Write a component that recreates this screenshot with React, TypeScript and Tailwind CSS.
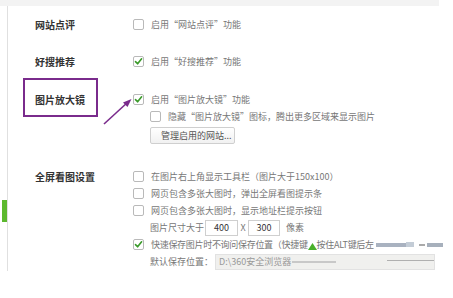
import React from "react";

function Box({ checked = false }: { checked?: boolean }) {
  return (
    <span className="w-[11px] h-[11px] shrink-0 border border-[#b9b9b9] rounded-[2px] bg-white flex items-center justify-center">
      {checked && (
        <svg width="9" height="9" viewBox="0 0 9 9">
          <path d="M1.5 4.6 L3.6 6.8 L7.6 1.8" fill="none" stroke="#3a9a2a" strokeWidth="1.6" strokeLinecap="round" strokeLinejoin="round" />
        </svg>
      )}
    </span>
  );
}

function Opt({ checked = false, children }: { checked?: boolean; children: React.ReactNode }) {
  return (
    <div className="h-[17px] flex items-center gap-[7px] text-[9px] text-[#777] whitespace-nowrap">
      <Box checked={checked} />
      <span>{children}</span>
    </div>
  );
}

function Label({ children }: { children: React.ReactNode }) {
  return (
    <div className="w-[125px] shrink-0 pl-[27px] h-[17px] flex items-center text-[10px] font-semibold text-[#333] whitespace-nowrap">
      {children}
    </div>
  );
}

export default function App() {
  return (
    <div className="w-[453px] h-[298px] bg-white relative overflow-hidden font-['Noto_Sans_CJK_SC','Noto_Sans',sans-serif]">
      <div className="h-[6px] w-[439px] bg-[#f3f3f3]" />
      <div className="flex">
        <div className="w-[7px] shrink-0">
          <div className="mt-[194px] ml-[2px] w-[5px] h-[22px] bg-[#5cb82e]" />
        </div>
        <div className="flex-1 border-l border-[#e0e0e0] flex flex-col">
          {/* 网站点评 */}
          <div className="flex mt-[10px]">
            <Label>网站点评</Label>
            <Opt>启用“网站点评”功能</Opt>
          </div>
          {/* 好搜推荐 */}
          <div className="flex mt-[20px]">
            <Label>好搜推荐</Label>
            <Opt checked>启用“好搜推荐”功能</Opt>
          </div>
          {/* 图片放大镜 */}
          <div className="flex mt-[21px] relative">
            <Label>图片放大镜</Label>
            <div className="flex flex-col">
              <Opt checked>启用“图片放大镜”功能</Opt>
              <div className="pl-[17px]">
                <Opt>隐藏“图片放大镜”图标，腾出更多区域来显示图片</Opt>
                <div className="mt-[2px] w-[85px] h-[17px] border border-[#cfcfcf] rounded-[2px] bg-gradient-to-b from-white to-[#f1f1f1] flex items-center pl-[10px] text-[9px] text-[#555] whitespace-nowrap">
                  管理启用的网站...
                </div>
              </div>
            </div>
            <div className="absolute left-[15px] top-[-13px] w-[75px] h-[39px] border-2 border-[#7a2b8c]" />
            <svg className="absolute left-[94px] top-[5px]" width="32" height="30" viewBox="0 0 32 30">
              <path d="M2 28 L26 6" stroke="#7a2b8c" strokeWidth="1.6" fill="none" />
              <path d="M29.5 3 L21 6.5 L25.5 11 Z" fill="#7a2b8c" />
            </svg>
          </div>
          {/* 全屏看图设置 */}
          <div className="flex mt-[24px]">
            <Label>全屏看图设置</Label>
            <div className="flex flex-col">
              <Opt>在图片右上角显示工具栏（图片大于150x100）</Opt>
              <Opt>网页包含多张大图时，弹出全屏看图提示条</Opt>
              <Opt>网页包含多张大图时，显示地址栏提示按钮</Opt>
              <div className="pl-[17px] h-[17px] flex items-center text-[9px] text-[#777] whitespace-nowrap">
                <span className="w-[55px] shrink-0 overflow-visible">图片尺寸大于</span>
                <span className="w-[33px] h-[16px] shrink-0 border border-[#cfcfcf] bg-white flex items-center justify-center text-[#333]">400</span>
                <span className="w-[10px] shrink-0 text-center">X</span>
                <span className="w-[32px] h-[16px] shrink-0 border border-[#cfcfcf] bg-white flex items-center justify-center text-[#333]">300</span>
                <span className="ml-[6px]">像素</span>
              </div>
              <div className="h-[17px] flex items-center gap-[7px] text-[9px] text-[#777] whitespace-nowrap">
                <Box checked />
                <span className="flex items-center tracking-[-0.3px]">
                  快速保存图片时不询问保存位置（快捷键
                  <svg width="9" height="7" viewBox="0 0 9 7" className="mt-[3px]">
                    <path d="M4.5 0 L9 7 L0 7 Z" fill="#49b02a" />
                  </svg>
                  按住ALT键后左
                  <span className="ml-[2px] w-[30px] h-[4px] bg-[#a9b2c0]" />
                  <span className="w-[8px] h-[5px] bg-[#c3ccd6]" />
                  <span className="ml-[5px] w-[6px] h-[2px] bg-[#aaa]" />
                  <span className="ml-[2px] w-[16px] h-[4px] bg-[#a7b0bc]" />
                </span>
              </div>
              <div className="pl-[17px] h-[18px] flex items-center text-[9px] text-[#777] whitespace-nowrap">
                <span className="w-[65px] shrink-0">默认保存位置：</span>
                <span className="w-[220px] h-[16px] border border-[#e2e2e2] bg-[#f0f0ee] flex items-center pl-[3px] text-[#999] relative">
                  D:\360安全浏览器
                  <span className="ml-[1px] w-[48px] h-[2px] bg-[#c8c8c8]" />
                  <span className="ml-[51px] w-[51px] h-[1px] bg-[#b0b0b0] mt-[-4px]" />
                </span>
              </div>
            </div>
          </div>
        </div>
      </div>
    </div>
  );
}
